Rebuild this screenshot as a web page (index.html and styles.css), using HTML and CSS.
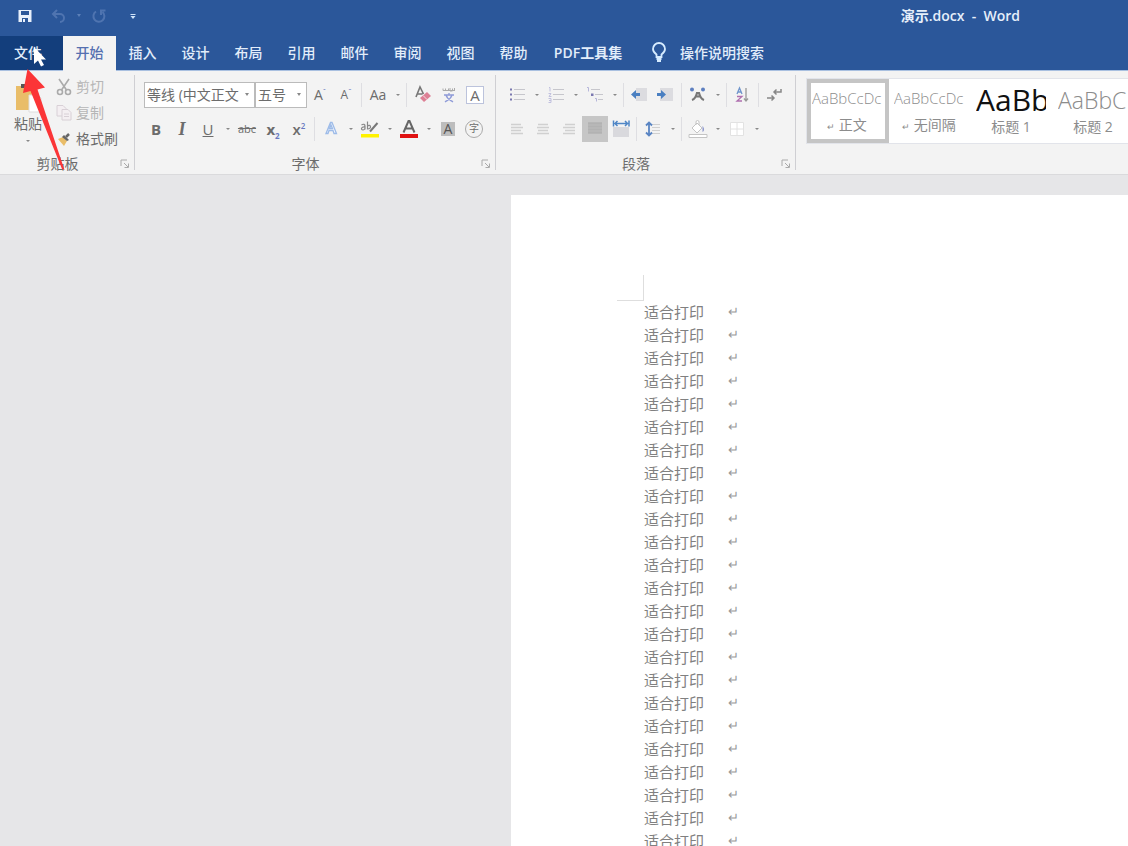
FILE: index.html
```html
<!DOCTYPE html>
<html lang="zh-CN">
<head>
<meta charset="utf-8">
<title>演示.docx - Word</title>
<link rel="stylesheet" href="styles.css">
</head>
<body>
<header class="titlebar">
  <div class="quick">
    <button class="qbtn" aria-label="保存"><svg width="16" height="16" viewBox="0 0 16 16"><path d="M1.500 2h13v12h-13z" fill="#e8f0fb"/><path d="M4 3h8v4H4z" fill="#2b579a"/><path d="M5 10h6v4H5z" fill="#2b579a"/><path d="M6 11h2v3H6z" fill="#e8f0fb"/></svg></button>
    <button class="qbtn qbtn-undo" aria-label="撤消"><svg width="16" height="16" viewBox="0 0 16 16" fill="none" stroke="#4f74b0" stroke-width="2"><path d="M6 2 2 6l4 4M2.500 6H9a4 4 0 0 1 0 8"/></svg></button>
    <button class="qdrop" aria-label="撤消选项"><svg width="6" height="4" viewBox="0 0 6 4"><path d="M1 0h4L3 3z" fill="#5c80b8"/></svg></button>
    <button class="qbtn" aria-label="重复"><svg width="16" height="16" viewBox="0 0 16 16" fill="none" stroke="#4f74b0" stroke-width="2"><path d="M5 3.500a5.500 5.500 0 1 0 6.500.5M14.500 2.500h-4.500v4.500"/></svg></button>
    <button class="qbtn qbtn-more" aria-label="自定义快速访问工具栏"><svg width="8" height="8" viewBox="0 0 8 8"><path d="M1.500 2h5v1h-5zM1.500 4h5L4 7z" fill="#cfe4fa"/></svg></button>
  </div>
  <h1 class="doc-title">演示.docx&nbsp; -&nbsp; Word</h1>
</header>

<nav class="tabs">
  <button class="tab tab-file">文件</button>
  <button class="tab tab-active">开始</button>
  <button class="tab">插入</button>
  <button class="tab">设计</button>
  <button class="tab">布局</button>
  <button class="tab">引用</button>
  <button class="tab">邮件</button>
  <button class="tab">审阅</button>
  <button class="tab">视图</button>
  <button class="tab">帮助</button>
  <button class="tab tab-wide">PDF工具集</button>
  <button class="tell"><svg width="16" height="22" viewBox="0 0 16 22" fill="none" stroke="#d6ecff" stroke-width="1.800"><path d="M5.500 15v-2.500C3.500 11 2 9.500 2 7a6 6 0 0 1 12 0c0 2.500-1.500 4-3.500 5.500V15z"/><path d="M5.500 17h5M6 19h4" stroke-width="2"/></svg>操作说明搜索</button>
</nav>

<main class="ribbon">
  <section class="group clip">
    <div class="clip-body">
      <button class="paste"><svg width="28" height="32" viewBox="0 0 28 32"><path d="M2 4h18v24H2z" fill="#e9bd69"/><path d="M7 2h8v4H7z" fill="#555"/><path d="M15 13h9l3 3v14H15z" fill="#fff" stroke="#ddd"/></svg>粘贴<svg class="down" width="6" height="4" viewBox="0 0 6 4"><path d="M1 0h4L3 2z" fill="#888"/></svg></button>
      <div class="clip-list">
        <button class="clip-item off"><svg width="16" height="18" viewBox="0 0 16 18" fill="none" stroke="#aaa" stroke-width="1.600"><path d="M3 1l7.500 11M13 1 5.500 12"/><circle cx="4" cy="14" r="2.500"/><circle cx="12" cy="14" r="2.500"/></svg>剪切</button>
        <button class="clip-item off"><svg width="16" height="18" viewBox="0 0 16 18" fill="#f4eff2" stroke="#d8d0d6"><path d="M1 1.500h6l3 3V12H1z"/><path d="M6 5.500h6l3 3V16H6z"/><path d="M8 10h5M8 12.500h5"/></svg>复制</button>
        <button class="clip-item"><svg width="16" height="18" viewBox="0 0 16 18"><path d="M2 9l5-2 4 4-3 5z" fill="#e9bd69"/><path d="M6 7l2-2 5 5-2 1z" fill="#666"/><path d="M10 7l3-3" stroke="#666" stroke-width="2.500"/></svg>格式刷</button>
      </div>
    </div>
    <footer class="foot"><span>剪贴板</span><button class="launch" aria-label="剪贴板选项"><svg width="10" height="10" viewBox="0 0 10 10" fill="none" stroke="#aaa"><path d="M1 7V1h6M4 4l4 4M8.500 4.500v4h-4"/></svg></button></footer>
  </section>

  <section class="group font">
    <div class="row row-combo">
      <button class="combo combo-name"><span>等线 (中文正文)</span><svg width="6" height="4" viewBox="0 0 6 4"><path d="M1 0h4L3 3z" fill="#888"/></svg></button>
      <button class="combo combo-size"><span>五号</span><svg width="6" height="4" viewBox="0 0 6 4"><path d="M1 0h4L3 3z" fill="#888"/></svg></button>
      <button class="ib" aria-label="增大字号"><span class="grow">A<sup>ˆ</sup></span></button>
      <button class="ib" aria-label="减小字号"><span class="shrink">A<sup>ˇ</sup></span></button>
      <i class="sep"></i>
      <button class="ib">Aa</button><button class="dd" aria-label="更改大小写"></button>
      <i class="sep"></i>
      <button class="ib" aria-label="清除格式"><svg width="20" height="20" viewBox="0 0 20 20"><path d="M3 12 7 2l3.500 7M4.500 9h5" fill="none" stroke="#777" stroke-width="1.600"/><path d="M7 13l7-6 4 4-7 6z" fill="#dd8095"/><path d="M10 10.500l4 4" stroke="#f3dde2"/></svg></button>
      <button class="ib" aria-label="拼音指南"><svg width="20" height="20" viewBox="0 0 20 20" fill="none"><path d="M4 5.500v-2M6.500 3.500v2h3v-2M11 3v3h2.500V3.500M15.500 3v3M4 5.500h12" stroke="#aaa"/><path d="M5 10h10M10 8v2M7 10c1 4 4 5 7 7M13 10c-1 4-4 5-7 7" stroke="#8f9bd8" stroke-width="1.300"/></svg></button>
      <button class="ib" aria-label="字符边框"><span class="boxed">A</span></button>
    </div>
    <div class="row">
      <button class="ib bold">B</button>
      <button class="ib ital">I</button>
      <button class="ib under">U</button><button class="dd" aria-label="下划线选项"></button>
      <button class="ib strike">abc</button>
      <button class="ib bold">x<sub>2</sub></button>
      <button class="ib semi">x<sup>2</sup></button>
      <i class="sep"></i>
      <button class="ib" aria-label="文本效果"><svg width="20" height="20" viewBox="0 0 20 20" fill="#f8faff" stroke="#9dbbe8" stroke-width="1.300"><path d="M5 14.500 9.500 3.500h1.500l4.500 11h-2.500l-1-3h-4l-1 3zM8.500 9.500h3L10 6z"/></svg></button><button class="dd" aria-label="文本效果选项"></button>
      <button class="ib" aria-label="突出显示"><svg width="20" height="20" viewBox="0 0 20 20" fill="none" stroke="#888"><path d="M1.500 6c2-1.500 3.500-.5 3.500 1v3.500M5 8c-4-.5-4.500 3-2 3 1 0 2-1 2-2M7.500 2.500v8M7.500 7c3-2.500 5 3 0 3" stroke-width="1.200"/><path d="M17.500 4 10 12.500" stroke="#777" stroke-width="2"/><path d="M1 15h18v3.500H1z" fill="#fff200" stroke="none"/></svg></button><button class="dd" aria-label="突出显示颜色"></button>
      <button class="ib" aria-label="字体颜色"><svg width="20" height="20" viewBox="0 0 20 20"><path d="M4.500 13.500 9.500 2h1l5 11.500M6.500 9.500h7" fill="none" stroke="#666" stroke-width="2"/><path d="M1 15h18v4H1z" fill="#e01212"/></svg></button><button class="dd" aria-label="字体颜色选项"></button>
      <button class="ib" aria-label="字符底纹"><span class="shade">A</span></button>
      <button class="ib" aria-label="带圈字符"><span class="ring">字</span></button>
    </div>
    <footer class="foot"><span>字体</span><button class="launch" aria-label="字体选项"><svg width="10" height="10" viewBox="0 0 10 10" fill="none" stroke="#aaa"><path d="M1 7V1h6M4 4l4 4M8.500 4.500v4h-4"/></svg></button></footer>
  </section>

  <section class="group para">
    <div class="row">
      <button class="ib" aria-label="项目符号"><svg width="20" height="20" viewBox="0 0 20 20"><path d="M7 4.500h11M7 9.500h11M7 14.500h11" stroke="#c6c6cc"/><path d="M3 3.500h2v2H3zM3 8.500h2v2H3zM3 13.500h2v2H3z" fill="#7a78b0"/></svg></button><button class="dd" aria-label="项目符号库"></button>
      <button class="ib" aria-label="编号"><svg width="20" height="20" viewBox="0 0 20 20" fill="none"><path d="M7 4.500h11M7 9.500h11M7 14.500h11" stroke="#c6c6cc"/><path d="M3 2.500h1v4M2.500 8.500H5L3 11.500h2.500M2.500 13.500H5v4H2.500M3 15.500h2" stroke="#c0c0de"/></svg></button><button class="dd" aria-label="编号库"></button>
      <button class="ib" aria-label="多级列表"><svg width="20" height="20" viewBox="0 0 20 20" fill="none"><path d="M6 4.500h9M10 9.500h8M13 14.500h5" stroke="#c6c6cc"/><path d="M2 2.500h1.500v4M10 13.500h1.500v3" stroke="#b6b6da"/><path d="M6 8.500h2.500v2.500H6z" fill="#7a78b0"/></svg></button><button class="dd" aria-label="列表库"></button>
      <i class="sep"></i>
      <button class="ib" aria-label="减少缩进量"><svg width="20" height="20" viewBox="0 0 20 20"><path d="M6 3h11v13H6z" fill="#dcdce0"/><path d="M1 9.500l5-4.500v3h4v3H6v3z" fill="#4a7fc1"/></svg></button>
      <button class="ib" aria-label="增加缩进量"><svg width="20" height="20" viewBox="0 0 20 20"><path d="M4 3h13v13H4z" fill="#dcdce0"/><path d="M10 9.500 5 5v3H1v3h4v3z" fill="#4a7fc1"/></svg></button>
      <i class="sep"></i>
      <button class="ib" aria-label="中文版式"><svg width="20" height="20" viewBox="0 0 20 20" fill="none"><path d="M4 15c3-1 4-3 5-7h2c1 4 2 6 5 7M7 11.500h6" stroke="#777" stroke-width="2.200"/><circle cx="4" cy="4.500" r="2" fill="#5d7fc0"/><circle cx="15" cy="4.500" r="2" fill="#5d7fc0"/></svg></button><button class="dd" aria-label="中文版式选项"></button>
      <i class="sep"></i>
      <button class="ib" aria-label="排序"><svg width="20" height="20" viewBox="0 0 20 20" fill="none" stroke-width="1.300"><path d="M4 9l2.500-6L9 9M5 7h3" stroke="#6f95cc"/><path d="M4 11.500h5L4 16h5" stroke="#b070b0"/><path d="M13 3v13M11 13.500 13 16l2-2.500" stroke="#999"/></svg></button>
      <i class="sep"></i>
      <button class="ib" aria-label="显示编辑标记"><svg width="20" height="20" viewBox="0 0 20 20" fill="none" stroke="#888" stroke-width="1.500"><path d="M16 4v3H9M11.500 4.500 9 7l2.500 2.500M2 13h7M6.500 10.500 9 13l-2.500 2.500"/></svg></button>
    </div>
    <div class="row">
      <button class="ib" aria-label="左对齐"><svg width="20" height="20" viewBox="0 0 20 20"><path d="M4 5.500h10M4 8.500h12M4 11.500h10M4 14.500h12" stroke="#d0d0d0" stroke-width="1.500"/></svg></button>
      <button class="ib" aria-label="居中"><svg width="20" height="20" viewBox="0 0 20 20"><path d="M5 5.500h10M4 8.500h12M5 11.500h10M4 14.500h12" stroke="#d0d0d0" stroke-width="1.500"/></svg></button>
      <button class="ib" aria-label="右对齐"><svg width="20" height="20" viewBox="0 0 20 20"><path d="M6 5.500h10M4 8.500h12M6 11.500h10M4 14.500h12" stroke="#d0d0d0" stroke-width="1.500"/></svg></button>
      <button class="ib picked" aria-label="两端对齐"><svg width="20" height="20" viewBox="0 0 20 20"><path d="M3 4.500h14M3 7.500h14M3 10.500h14M3 13.500h14" stroke="#b2b2b2" stroke-width="2.600"/></svg></button>
      <button class="ib" aria-label="分散对齐"><svg width="20" height="20" viewBox="0 0 20 20"><path d="M2 8h16v10H2z" fill="#d9d9dd"/><path d="M2.500 1.500v6M18 1.500v6M4 4.500h12.500M6.500 2 4 4.500 6.500 7M14 2l2.500 2.500L14 7" fill="none" stroke="#4f86c6" stroke-width="1.500"/></svg></button>
      <i class="sep"></i>
      <button class="ib" aria-label="行距"><svg width="20" height="20" viewBox="0 0 20 20" fill="none"><path d="M9 5.500h8M9 8.500h8M9 11.500h8M9 14.500h8" stroke="#d0d0d0"/><path d="M6 3.500v13M3 6.500 6 3.500l3 3M3 13.500l3 3 3-3" stroke="#5a85c3" stroke-width="1.800"/></svg></button><button class="dd" aria-label="行距选项"></button>
      <i class="sep"></i>
      <button class="ib" aria-label="底纹"><svg width="20" height="20" viewBox="0 0 20 20" fill="#fff" stroke="#c4c4c4"><path d="M4 9l5-5 5 5-5 5zM8 6V3a1.500 1.500 0 0 1 3 0v3"/><path d="M14.500 7c2 2 2 5 0 6z" fill="#8c96cc" stroke="none"/><path d="M1 15.500h18v3H1z"/></svg></button><button class="dd" aria-label="底纹颜色"></button>
      <button class="ib" aria-label="边框"><svg width="20" height="20" viewBox="0 0 20 20" fill="#fff" stroke="#e2e2e2"><path d="M3.500 3.500h13v13h-13zM10 3.500v13M3.500 10h13"/></svg></button><button class="dd" aria-label="边框选项"></button>
    </div>
    <footer class="foot"><span>段落</span><button class="launch" aria-label="段落选项"><svg width="10" height="10" viewBox="0 0 10 10" fill="none" stroke="#aaa"><path d="M1 7V1h6M4 4l4 4M8.500 4.500v4h-4"/></svg></button></footer>
  </section>

  <section class="styles">
    <button class="style style-on"><span class="sample">AaBbCcDc</span><span class="sname"><small>↵</small> 正文</span></button>
    <button class="style"><span class="sample">AaBbCcDc</span><span class="sname"><small>↵</small> 无间隔</span></button>
    <button class="style"><span class="sample sample-h1">AaBb</span><span class="sname">标题 1</span></button>
    <button class="style"><span class="sample sample-h2">AaBbC</span><span class="sname">标题 2</span></button>
  </section>
</main>

<div class="workspace">
  <article class="page">
    <div class="corner"></div>
    <div class="text">
      <p><span>适合打印</span><small>↵</small></p><p><span>适合打印</span><small>↵</small></p>
      <p><span>适合打印</span><small>↵</small></p><p><span>适合打印</span><small>↵</small></p>
      <p><span>适合打印</span><small>↵</small></p><p><span>适合打印</span><small>↵</small></p>
      <p><span>适合打印</span><small>↵</small></p><p><span>适合打印</span><small>↵</small></p>
      <p><span>适合打印</span><small>↵</small></p><p><span>适合打印</span><small>↵</small></p>
      <p><span>适合打印</span><small>↵</small></p><p><span>适合打印</span><small>↵</small></p>
      <p><span>适合打印</span><small>↵</small></p><p><span>适合打印</span><small>↵</small></p>
      <p><span>适合打印</span><small>↵</small></p><p><span>适合打印</span><small>↵</small></p>
      <p><span>适合打印</span><small>↵</small></p><p><span>适合打印</span><small>↵</small></p>
      <p><span>适合打印</span><small>↵</small></p><p><span>适合打印</span><small>↵</small></p>
      <p><span>适合打印</span><small>↵</small></p><p><span>适合打印</span><small>↵</small></p>
      <p><span>适合打印</span><small>↵</small></p><p><span>适合打印</span><small>↵</small></p>
    </div>
  </article>
</div>

<svg class="pointer" width="70" height="130" viewBox="0 44 70 130">
  <path d="M34 47v17l4-3.500 3 6 3-1.500-3-5.500h5z" fill="#fff"/>
  <path d="M27.500 69 45 87.500 37.500 89.500 64.500 170 62 169 30.500 91 23 93z" fill="#fb3537"/>
</svg>
</body>
</html>
```
FILE: styles.css
```css
* { box-sizing: border-box; }

body {
  margin: 0;
  height: 100vh;
  overflow: hidden;
  display: flex;
  flex-direction: column;
  position: relative;
  background: #e6e6e8;
  color: #6c6c6c;
  font: 14px/20px "Open Sans", "Noto Sans CJK SC", sans-serif;
}

button {
  font: inherit;
  color: inherit;
  border: 0;
  padding: 0;
  margin: 0;
  background: none;
  white-space: nowrap;
}

svg { display: block; flex: none; }

.titlebar {
  flex: none;
  height: 36px;
  display: flex;
  align-items: center;
  justify-content: space-between;
  padding: 0 108px 5px 12px;
  background: #2b579a;
}
.quick { display: flex; align-items: center; }
.qbtn { width: 26px; height: 26px; display: grid; place-items: center; }
.qbtn-undo { margin-left: 8px; }
.qbtn-more { margin-left: 8px; }
.qdrop { width: 14px; display: grid; place-items: center; }
.doc-title { margin: 0; color: #e6effa; font-size: 14px; font-weight: 600; }

.tabs {
  flex: none;
  display: flex;
  height: 35px;
  background: #2b579a;
  border-bottom: 1px solid #a9c0e0;
  color: #e2edfa;
  font-weight: 500;
}
.tab { width: 53px; padding-bottom: 1px; }
.tab-file { width: 63px; padding-right: 7px; background: #133e7c; }
.tab-active { height: 35px; padding-bottom: 2px; background: #f3f3f3; color: #5570b0; }
.tab-wide { width: 96px; font-weight: 600; }
.tell { display: flex; align-items: center; gap: 13px; padding-left: 15px; }

.ribbon {
  flex: none;
  display: flex;
  height: 104px;
  background: #f3f3f3;
  border-bottom: 1px solid #dadadc;
}
.group { flex: none; display: flex; flex-direction: column; padding-top: 11px; position: relative; }
.group::after {
  content: "";
  position: absolute;
  right: 0;
  top: 4px;
  bottom: 4px;
  border-right: 1px solid #cfcfd3;
}
.clip { width: 135px; }
.font { width: 361px; padding-left: 8px; }
.para { width: 300px; padding-left: 8px; }
.font .foot { margin-left: -8px; }
.para .foot { margin-left: -8px; }

.foot {
  margin-top: auto;
  display: flex;
  align-items: center;
  text-align: center;
  height: 20px;
}
.foot span { flex: 1; }
.launch { width: 20px; height: 20px; display: grid; place-items: center; }

.clip-body { display: flex; }
.paste { width: 56px; display: flex; flex-direction: column; align-items: center; }
.down { margin-top: 6px; }
.clip-list { display: flex; flex-direction: column; margin-top: -8px; }
.clip-item { display: flex; align-items: center; gap: 4px; height: 26px; }
.off { color: #b6b6b6; }

.row { display: flex; align-items: center; height: 26px; margin-bottom: 8px; }
.row-combo { padding-left: 1px; }
.combo {
  height: 26px;
  display: flex;
  align-items: center;
  justify-content: space-between;
  padding: 0 4px 0 2px;
  background: #fff;
  border: 1px solid #bbb;
}
.combo span { overflow: hidden; }
.combo-name { width: 111px; }
.combo-name span { width: 92px; text-align: left; }
.combo-size { width: 52px; }
.ib { flex: none; width: 26px; height: 26px; display: grid; place-items: center; }
.dd { flex: none; width: 13px; height: 26px; display: grid; place-items: center; }
.dd::before { content: ""; border: 2px solid transparent; border-top-color: #888; border-bottom: 0; }
.sep { flex: none; width: 6px; height: 24px; border-right: 1px solid #dedee2; margin-right: 3px; margin-left: -3px; }
.picked { background: #c6c6c6; }

.bold, .ital, .under, .semi { display: block; font-size: 15px; line-height: 24px; }
.bold { font-weight: 700; }
.semi { font-weight: 600; }
.ital { font-family: "Liberation Serif", serif; font-style: italic; font-weight: 700; font-size: 18px; }
.under { text-decoration: underline; }
.strike { font-size: 11px; text-decoration: line-through; }
.ib sub, .ib sup { font-size: 8px; line-height: 0; color: #6878c0; }
.grow { font-size: 14px; }
.shrink { font-size: 12px; }
.boxed { width: 18px; height: 18px; line-height: 16px; border: 1px solid #bcc3dc; background: #fff; font-size: 15px; }
.shade { width: 14px; height: 14px; line-height: 14px; background: #bdbdbd; color: #555; }
.ring { width: 18px; height: 18px; line-height: 15px; border: 1px solid #aaa; border-radius: 50%; font-size: 10px; }

.styles {
  flex: 1;
  min-width: 0;
  display: flex;
  overflow: hidden;
  margin: 7px 0 30px 10px;
  background: #fff;
  border: 1px solid #e2e4ea;
  border-right: 0;
}
.style {
  flex: none;
  width: 82px;
  display: flex;
  flex-direction: column;
  justify-content: flex-end;
  border: 4px solid transparent;
  padding: 0 3px 0 1px;
  text-align: center;
  color: #8c8c8c;
}
.style-on { border-color: #c5c5c5; }
.sample { overflow: hidden; text-align: left; font-size: 15px; line-height: 30px; font-weight: 300; }
.sample-h1 { font-size: 30px; font-weight: 400; color: #111; }
.sample-h2 { font-size: 23px; }
.sname { line-height: 24px; }
.sname small { font-size: 9px; }

.workspace { flex: 1; min-height: 0; display: flex; padding: 20px 0 0 511px; }
.page { flex: 1; overflow: hidden; background: #fff; padding: 80px 0 0 106px; }
.corner { width: 27px; height: 26px; border: solid #dedede; border-width: 0 1px 1px 0; }
.text { margin-left: 27px; }
.text p { display: flex; margin: 0; font-size: 15px; line-height: 23px; color: #808080; }
.text span { width: 84px; }
.text small { font-size: 13px; line-height: 21px; color: #999; }

.pointer { position: absolute; left: 0; top: 44px; pointer-events: none; }
```
